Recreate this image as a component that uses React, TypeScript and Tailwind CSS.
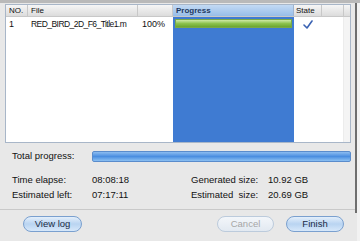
import React from "react";

export default function App() {
  const font = { fontFamily: '"Liberation Sans", Arial, sans-serif' };
  return (
    <div className="relative w-[360px] h-[241px] overflow-hidden bg-[#e8e8e8] text-[#111]" style={font}>
      <div className="h-[3px] bg-[#b9b9b9]" />
      <div className="flex">
        <div className="w-[355px] flex flex-col">
          {/* table */}
          <div className="ml-[5px] mt-[1px] w-[346px] h-[139px] border border-[#a8b6c8] bg-white flex flex-col">
            <div className="flex h-[12px] text-[8px] leading-[12px] border-b border-[#c8c8c8] bg-gradient-to-b from-[#f6f6f6] to-[#dcdcdc]">
              <div className="w-[22px] pl-[3px] border-r border-[#c8c8c8]">NO.</div>
              <div className="w-[110px] pl-[3px] border-r border-[#c8c8c8]">File</div>
              <div className="w-[35px] border-r border-[#c8c8c8]" />
              <div className="w-[121px] pl-[3px] font-bold text-[#1d3760] bg-gradient-to-b from-[#c3daf4] to-[#97bde8] border-r border-[#9fb4cf]">Progress</div>
              <div className="w-[28px] pl-[2px] border-r border-[#c8c8c8]">State</div>
              <div className="w-[22px] border-r border-[#c8c8c8]" />
              <div className="flex-1" />
            </div>
            <div className="flex flex-1">
              <div className="w-[22px] pl-[3px] text-[9px] leading-[13px] pt-[1px]">1</div>
              <div className="w-[110px] pl-[3px] text-[8.5px] leading-[13px] pt-[1px] whitespace-nowrap tracking-[-0.55px]">RED_BIRD_2D_F6_Title1.m</div>
              <div className="w-[35px] pl-[4px] text-[9px] leading-[13px] pt-[1px]">100%</div>
              <div className="w-[121px] bg-[#3f7bd2] pt-[2px] px-[2px]">
                <div className="h-[9px] bg-gradient-to-b from-[#cfe9a6] via-[#8cc24e] to-[#6aa530] border border-[#7aa848]" />
              </div>
              <div className="w-[28px] flex justify-center pt-[3px]">
                <svg width="10" height="9" viewBox="0 0 10 9">
                  <path d="M1 5 L4 8 L9 1" fill="none" stroke="#3b63b3" strokeWidth="1.6" strokeLinecap="round" strokeLinejoin="round" />
                </svg>
              </div>
              <div className="w-[22px] border-r border-[#ececec]" />
              <div className="flex-1 bg-[#f4f4f4]" />
            </div>
          </div>
          {/* totals */}
          <div className="flex items-center mt-[7px] h-[12px]">
            <div className="w-[92px] pl-[12px] text-[9.5px]">Total progress:</div>
            <div className="w-[259px] h-[11px] rounded-[2px] border border-[#5a8ccc] bg-gradient-to-b from-[#8cbcf0] via-[#4a8ee0] to-[#8cc0f2]" />
          </div>
          <div className="flex mt-[10px] text-[9.5px] leading-[15px]">
            <div className="w-[92px] pl-[12px]">
              <div>Time elapse:</div>
              <div>Estimated left:</div>
            </div>
            <div className="w-[99px]">
              <div>08:08:18</div>
              <div>07:17:11</div>
            </div>
            <div className="w-[77px]">
              <div>Generated size:</div>
              <div>Estimated &nbsp;size:</div>
            </div>
            <div>
              <div>10.92 GB</div>
              <div>20.69 GB</div>
            </div>
          </div>
          <div className="mt-[7px] h-px bg-[#c9c9c9]" />
          <div className="flex mt-[6px] text-[9.5px]">
            <button className="ml-[23px] w-[59px] h-[16px] rounded-full border border-[#7aa0cf] bg-gradient-to-b from-[#e4effb] via-[#b9d4f1] to-[#d7e8fa] text-[#1b2b44] leading-[14px]">View log</button>
            <button className="ml-[135px] w-[57px] h-[16px] rounded-full border border-[#bccbdc] bg-gradient-to-b from-[#f3f6fa] to-[#e2e9f1] text-[#a6a6a6] leading-[14px]">Cancel</button>
            <button className="ml-[12px] w-[58px] h-[16px] rounded-full border border-[#7aa0cf] bg-gradient-to-b from-[#e4effb] via-[#b9d4f1] to-[#d7e8fa] text-[#1b2b44] leading-[14px]">Finish</button>
          </div>
        </div>
        <div className="w-[2px] h-[210px] bg-[#6e6e6e]" />
        <div className="flex-1 h-[241px] bg-[#f2f2f2]" />
      </div>
    </div>
  );
}
